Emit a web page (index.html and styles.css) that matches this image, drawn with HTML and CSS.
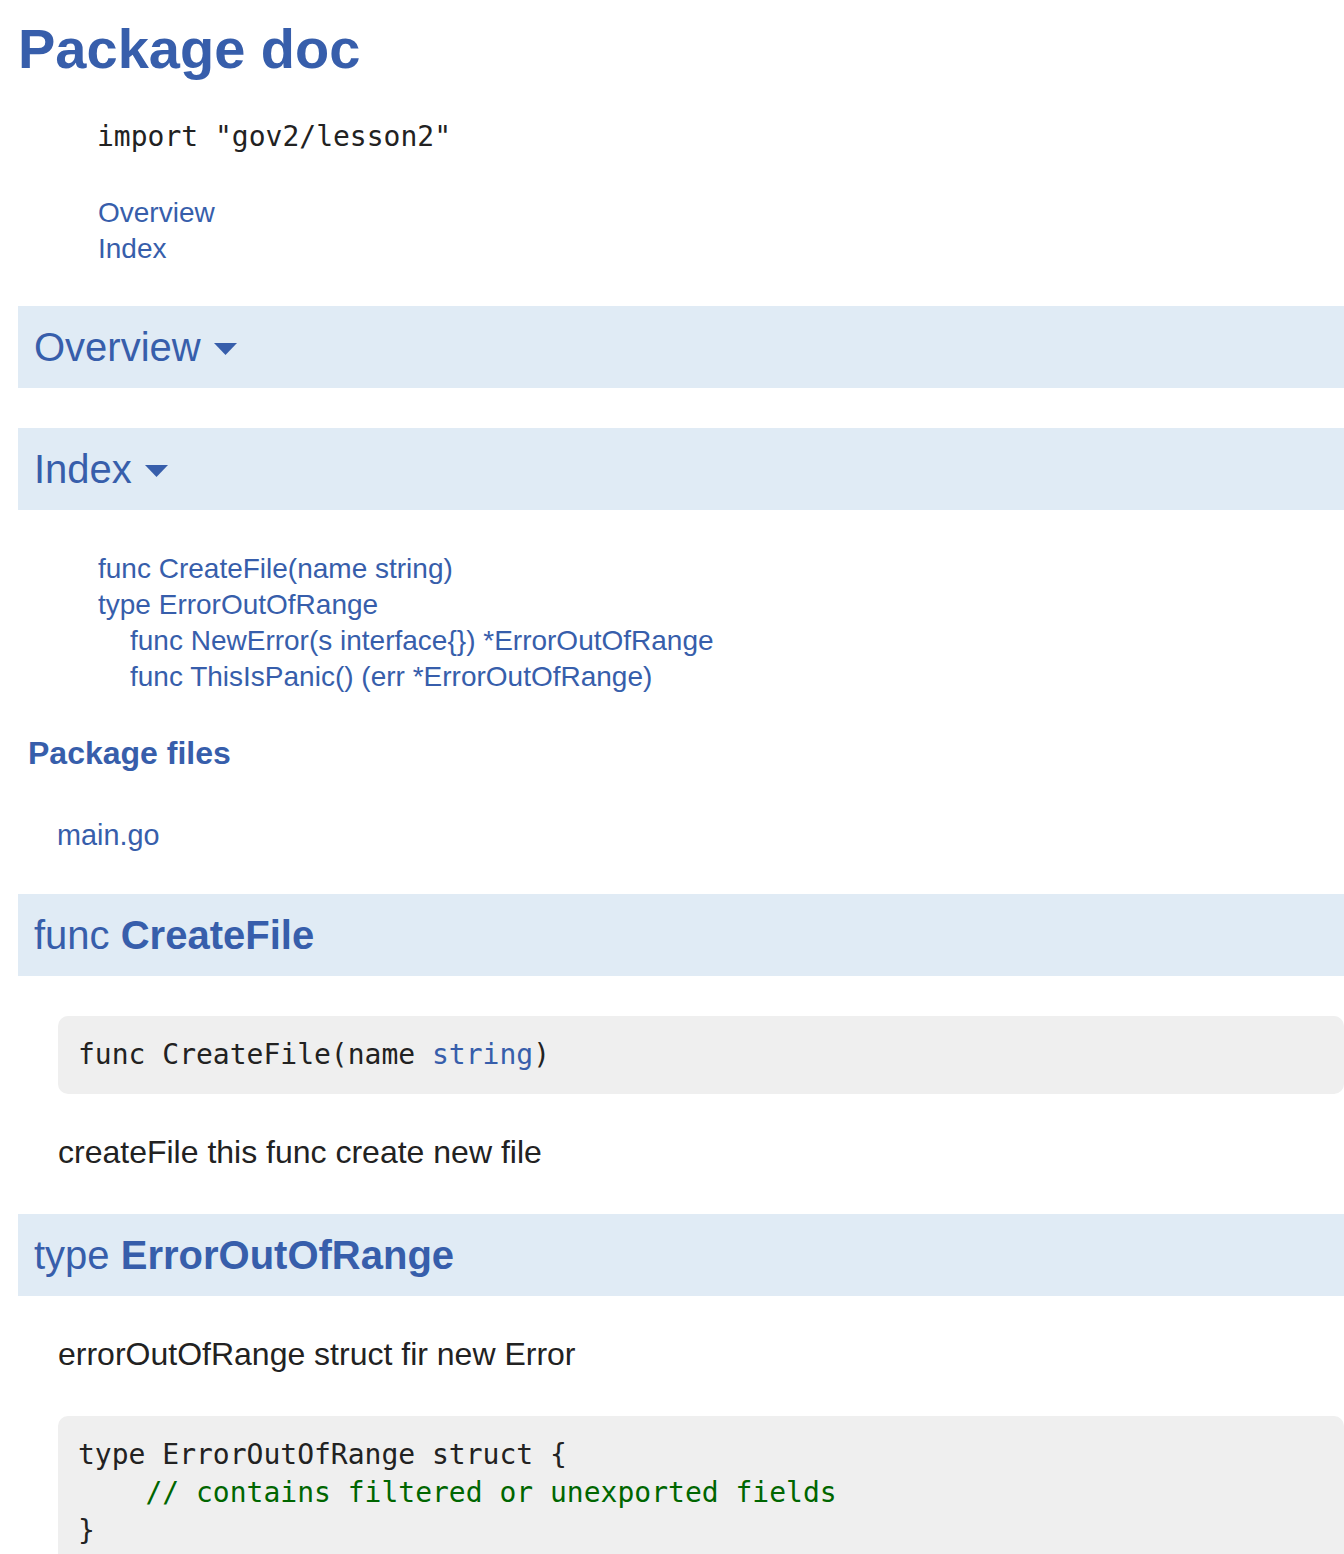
FILE: index.html
```html
<!DOCTYPE html>
<html lang="en">
<head>
<meta charset="utf-8">
<title>lesson2 - Go Documentation</title>
<link rel="stylesheet" href="styles.css">
</head>
<body>
<div class="page">
  <h1 class="title">Package doc</h1>
  <div class="import"><code>import "gov2/lesson2"</code></div>
  <div class="toc">
    <a href="#pkg-overview">Overview</a>
    <a href="#pkg-index">Index</a>
  </div>

  <h2 class="bar" id="pkg-overview">Overview<svg class="caret" width="23" height="12" viewBox="0 0 23 12"><polygon points="0,0 23,0 11.5,12" fill="#375EAB"/></svg></h2>

  <h2 class="bar" id="pkg-index">Index<svg class="caret" width="23" height="12" viewBox="0 0 23 12"><polygon points="0,0 23,0 11.5,12" fill="#375EAB"/></svg></h2>

  <ul class="index">
    <li><a href="#CreateFile">func CreateFile(name string)</a></li>
    <li><a href="#ErrorOutOfRange">type ErrorOutOfRange</a></li>
    <li class="sub"><a href="#NewError">func NewError(s interface{}) *ErrorOutOfRange</a></li>
    <li class="sub"><a href="#ThisIsPanic">func ThisIsPanic() (err *ErrorOutOfRange)</a></li>
  </ul>

  <h3 class="files-title">Package files</h3>
  <p class="files"><a href="#">main.go</a></p>

  <h2 class="bar" id="CreateFile">func <b>CreateFile</b></h2>
  <pre class="code">func CreateFile(name <a href="#">string</a>)</pre>
  <p class="desc">createFile this func create new file</p>

  <h2 class="bar" id="ErrorOutOfRange">type <b>ErrorOutOfRange</b></h2>
  <p class="desc">errorOutOfRange struct fir new Error</p>
  <pre class="code"><span class="line">type ErrorOutOfRange struct {</span>
<span class="line">    <span class="comment">// contains filtered or unexported fields</span></span>
<span class="line">}</span></pre>
</div>
</body>
</html>
```

FILE: styles.css
```css
html, body {
  margin: 0;
  padding: 0;
  background: #ffffff;
}

body {
  font-family: "Liberation Sans", Arial, sans-serif;
  color: #222222;
}

a {
  color: #375EAB;
  text-decoration: none;
}

.page {
  height: 1554px;
  overflow: hidden;
  padding-left: 18px;
  box-sizing: border-box;
}

.title {
  margin: 21px 0 0 0;
  font-size: 56px;
  line-height: 56px;
  font-weight: 700;
  color: #375EAB;
}

.import {
  margin: 41px 0 0 79px;
  height: 38px;
}

.import code,
.code {
  font-family: "DejaVu Sans Mono", Menlo, monospace;
  font-size: 28px;
  line-height: 38px;
  color: #222222;
}

.toc {
  margin: 39px 0 0 80px;
  font-size: 28px;
  line-height: 36px;
}

.toc a {
  display: block;
}

.bar {
  margin: 39px 0 0 0;
  padding: 16px;
  background: #E0EBF5;
  color: #375EAB;
  font-size: 40px;
  line-height: 50px;
  font-weight: 400;
}

.bar + .bar {
  margin-top: 40px;
}

.bar b {
  font-weight: 700;
}

.caret {
  display: inline-block;
  margin-left: 13px;
  vertical-align: 6px;
}

.index {
  list-style: none;
  margin: 41px 0 0 0;
  padding: 0 0 0 80px;
  font-size: 28px;
  line-height: 36px;
}

.index .sub {
  padding-left: 32px;
}

.files-title {
  margin: 38px 0 0 10px;
  font-size: 32px;
  line-height: 40px;
  font-weight: 700;
  color: #375EAB;
}

.files {
  margin: 44px 0 0 39px;
  font-size: 28.8px;
  line-height: 36px;
}

.files + .bar {
  margin-top: 41px;
}

.code {
  margin: 40px 0 0 40px;
  padding: 20px;
  background: #EFEFEF;
  border-radius: 10px;
  white-space: pre;
}

.desc {
  margin: 37px 0 0 40px;
  font-size: 32px;
  line-height: 42px;
  color: #222222;
}

.desc + .bar {
  margin-top: 41px;
}

.desc + .code {
  margin-top: 41px;
}

.comment {
  color: #006600;
}
```
